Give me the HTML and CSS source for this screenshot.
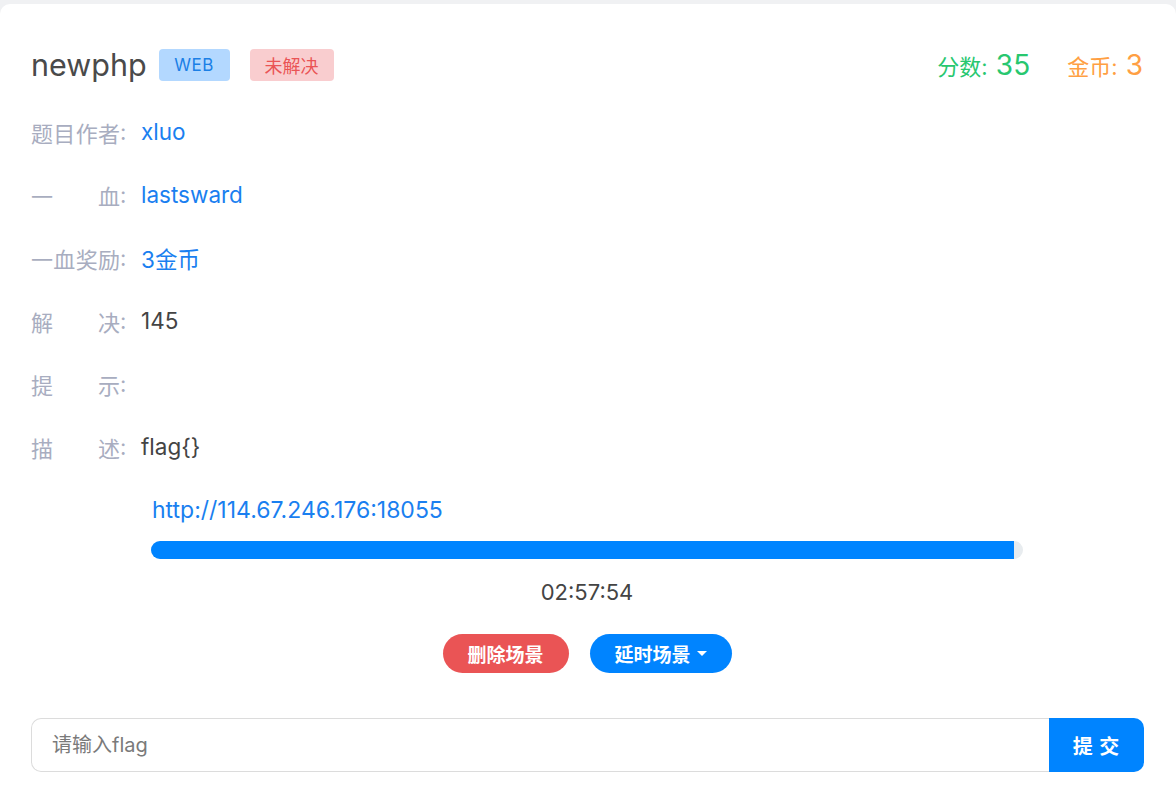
FILE: index.html
```html
<!DOCTYPE html>
<html lang="zh">
<head>
<meta charset="utf-8">
<title>newphp</title>
<link rel="stylesheet" href="styles.css">
</head>
<body>
<div class="card">
  <div class="head">
    <div class="title-wrap">
      <h1 class="title">newphp</h1>
      <span class="badge badge-web">WEB</span>
      <span class="badge badge-state">未解决</span>
    </div>
    <div class="stats">
      <span class="stat stat-score">分数: <b>35</b></span>
      <span class="stat stat-coin">金币: <b>3</b></span>
    </div>
  </div>
  <div class="rows">
    <div class="row"><span class="label">题目作者</span><span class="colon">:</span><span class="value blue">xluo</span></div>
    <div class="row"><span class="label">一血</span><span class="colon">:</span><span class="value blue">lastsward</span></div>
    <div class="row"><span class="label">一血奖励</span><span class="colon">:</span><span class="value blue">3金币</span></div>
    <div class="row"><span class="label">解决</span><span class="colon">:</span><span class="value">145</span></div>
    <div class="row"><span class="label">提示</span><span class="colon">:</span><span class="value"></span></div>
    <div class="row"><span class="label">描述</span><span class="colon">:</span><span class="value">flag{}</span></div>
  </div>
  <div class="scene">
    <a class="url" href="#">http://114.67.246.176:18055</a>
    <div class="progress"><div class="bar" style="width: 99%"></div></div>
    <div class="timer">02:57:54</div>
    <div class="actions">
      <button class="btn btn-red">删除场景</button>
      <button class="btn btn-blue">延时场景<span class="caret"></span></button>
    </div>
  </div>
  <div class="submit-row">
    <input class="flag-input" type="text" placeholder="请输入flag">
    <button class="submit">提 交</button>
  </div>
</div>
</body>
</html>
```

FILE: styles.css
```css
* { box-sizing: border-box; }
html, body { margin: 0; padding: 0; }
body {
  background: #f0f1f3;
  font-family: Inter, "Noto Sans CJK SC", sans-serif;
  color: #444;
  width: 1176px;
  height: 806px;
  overflow: hidden;
}
.card {
  margin-top: 4px;
  background: #fff;
  border-radius: 10px 10px 0 0;
  height: 802px;
  padding: 45px 32px 0 31px;
}
.head {
  display: flex;
  justify-content: space-between;
  align-items: center;
  height: 32px;
}
.title-wrap { display: flex; align-items: center; }
.title {
  margin: 0;
  font-size: 30.5px;
  font-weight: 400;
  color: #4a4a4a;
  line-height: 32px;
}
.badge {
  display: inline-flex;
  align-items: center;
  justify-content: center;
  height: 32px;
  border-radius: 4px;
  font-size: 17px;
}
.badge-web {
  margin-left: 12px;
  width: 71px;
  background: #b3d8ff;
  color: #1a7fe6;
  letter-spacing: 0.5px;
}
.badge-state {
  margin-left: 20px;
  width: 84px;
  background: #f9cdcf;
  color: #ea5455;
  font-size: 18px;
}
.stats { display: flex; align-items: baseline; gap: 37px; padding-right: 1px; }
.stat { font-size: 22px; }
.stat b { font-weight: 400; font-size: 28px; margin-left: 2px; }
.stat-score { color: #28c76f; }
.stat-coin { color: #ff9f43; }
.rows { margin-top: 19px; }
.row {
  display: flex;
  align-items: center;
  height: 63px;
  font-size: 22px;
}
.label {
  width: 89px;
  text-align: justify;
  text-align-last: justify;
  color: #a8adc0;
}
.colon { color: #a8adc0; width: 8px; }
.value { margin-left: 13px; color: #444; font-size: 22.5px; }
.blue { color: #1a7ff0; }
.scene {
  margin: 17px 121px 0 120px;
  display: flex;
  flex-direction: column;
}
.url {
  display: block;
  height: 30px;
  line-height: 30px;
  font-size: 23px;
  color: #1a7ff0;
  text-decoration: none;
  padding-left: 1px;
}
.progress {
  margin-top: 16px;
  height: 18px;
  border-radius: 9px;
  background: #e8ecef;
  overflow: hidden;
}
.bar { height: 100%; background: #0084ff; }
.timer {
  margin-top: 18px;
  height: 30px;
  line-height: 30px;
  text-align: center;
  font-size: 22px;
  color: #444;
}
.actions {
  margin-top: 27px;
  display: flex;
  justify-content: center;
  gap: 21px;
}
.btn {
  height: 39px;
  border: 0;
  border-radius: 20px;
  color: #fff;
  font-family: inherit;
  font-size: 19px;
  font-weight: 700;
  padding: 0 23px;
  display: inline-flex;
  align-items: center;
}
.btn-red { background: #ea5455; width: 126px; justify-content: center; }
.btn-blue { background: #0084ff; width: 142px; justify-content: center; }
.caret {
  display: inline-block;
  margin-left: 6px;
  border-left: 5px solid transparent;
  border-right: 5px solid transparent;
  border-top: 5px solid #fff;
}
.submit-row {
  margin-top: 45px;
  display: flex;
  height: 54px;
}
.flag-input {
  flex: 1;
  height: 54px;
  border: 1px solid #dcdcdc;
  border-right: 0;
  border-radius: 10px 0 0 10px;
  padding: 0 20px;
  font-family: inherit;
  font-size: 20px;
  color: #444;
  outline: none;
}
.flag-input::placeholder { color: #7a7a7a; }
.submit {
  width: 95px;
  height: 54px;
  border: 0;
  border-radius: 0 10px 10px 0;
  background: #0084ff;
  color: #fff;
  font-family: inherit;
  font-size: 20px;
  font-weight: 700;
  letter-spacing: 1px;
}
```
